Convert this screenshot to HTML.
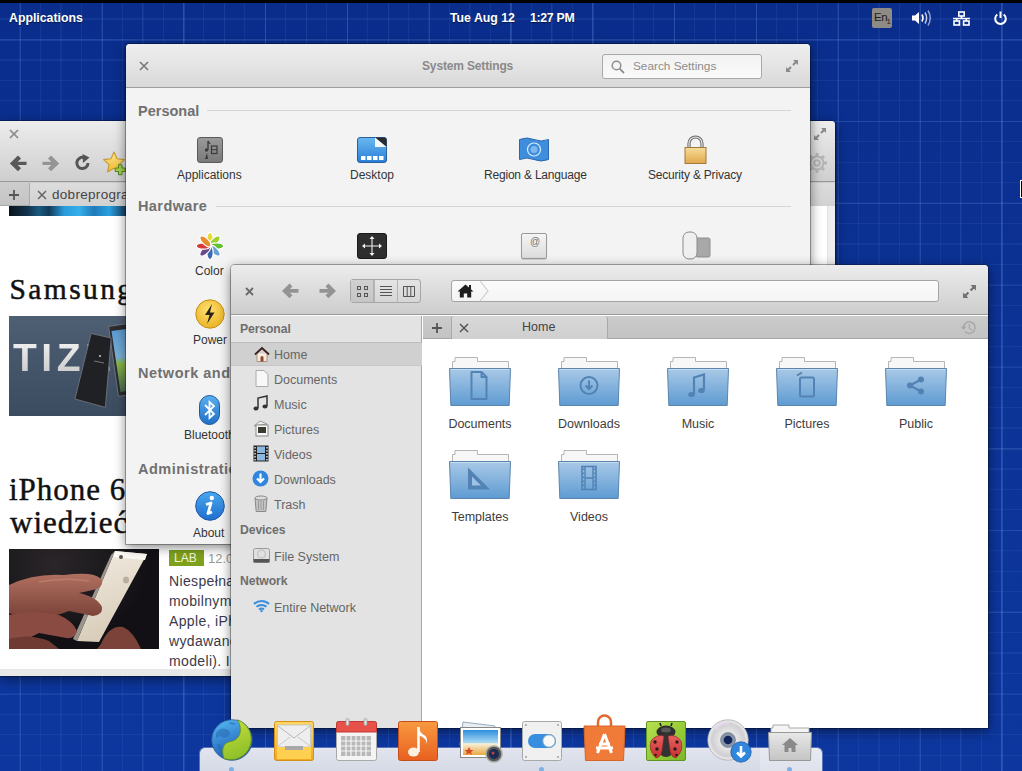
<!DOCTYPE html>
<html><head><meta charset="utf-8">
<style>
*{margin:0;padding:0;box-sizing:border-box}
html,body{width:1022px;height:771px;overflow:hidden;font-family:"Liberation Sans",sans-serif}
body{position:relative;background:#0b2c88}
.abs{position:absolute}
#wall{left:0;top:0;width:1022px;height:771px;
 background:
 repeating-linear-gradient(90deg, transparent 0px, transparent 19.7px, rgba(130,180,255,0.14) 19.7px, rgba(130,180,255,0.14) 21.0px, transparent 21.0px, transparent 81.8px),
 repeating-linear-gradient(90deg, transparent 0px, transparent 19.7px, rgba(130,180,255,0.06) 19.7px, rgba(130,180,255,0.06) 20.9px, transparent 20.9px, transparent 40.9px),
 repeating-linear-gradient(90deg, transparent 0px, transparent 19.45px, rgba(130,180,255,0.075) 19.45px, rgba(130,180,255,0.075) 20.45px),
 repeating-linear-gradient(180deg, transparent 0px, transparent 39.4px, rgba(130,180,255,0.12) 39.4px, rgba(130,180,255,0.12) 40.6px, transparent 40.6px, transparent 81.8px),
 repeating-linear-gradient(180deg, transparent 0px, transparent 18.45px, rgba(130,180,255,0.075) 18.45px, rgba(130,180,255,0.075) 19.6px, transparent 19.6px, transparent 20.45px),
 linear-gradient(#0a2d8c,#0c3396 50%,#0d379e);}
#topbar{left:0;top:0;width:1022px;height:3px;background:#000}
.ptxt{color:#fff;font-weight:bold;font-size:12.3px;top:10.8px;line-height:14px;text-shadow:0 1px 1px rgba(0,0,0,.5)}
.win{position:absolute;border-radius:4px 4px 0 0;overflow:hidden;box-shadow:0 3px 12px rgba(0,0,0,.5),0 0 0 1px rgba(0,0,0,.3)}
.t{position:absolute;white-space:nowrap;line-height:1}
svg{position:absolute;overflow:visible}
</style></head><body>
<div id="wall" class="abs"></div>
<div id="topbar" class="abs"></div>
<div class="abs ptxt" style="left:9px">Applications</div>
<div class="abs ptxt" style="left:450px">Tue Aug 12</div>
<div class="abs ptxt" style="left:530px;letter-spacing:-0.3px">1:27 PM</div>
<!-- panel indicators -->
<div class="abs" style="left:872px;top:8px;width:20px;height:20px;background:#8e8b84;border-radius:2px"></div>
<div class="t" style="left:874px;top:12px;font-size:11.5px;color:#1e1e1e;letter-spacing:-0.4px">En</div>
<div class="t" style="left:886.5px;top:18px;font-size:8px;color:#1e1e1e">1</div>
<svg style="left:910px;top:9px" width="22" height="18" viewBox="0 0 22 18">
 <path d="M2 6.5h3l4-3.5v12l-4-3.5h-3z" fill="#fff"/>
 <path d="M12 5.5q2 3.5 0 7" stroke="#fff" stroke-width="1.6" fill="none"/>
 <path d="M15 3.5q3.2 5.5 0 11" stroke="rgba(255,255,255,.75)" stroke-width="1.5" fill="none"/>
 <path d="M18 1.5q4.5 7.5 0 15" stroke="rgba(255,255,255,.55)" stroke-width="1.5" fill="none"/>
</svg>
<svg style="left:953px;top:11px" width="17" height="15" viewBox="0 0 17 15">
 <g fill="none" stroke="#fff" stroke-width="1.6">
 <rect x="5.8" y="1" width="5.4" height="4"/><rect x="1" y="10" width="5.4" height="4"/><rect x="10.6" y="10" width="5.4" height="4"/>
 <path d="M8.5 5v2.5M3.7 10V7.5h9.6V10M0 7.5h17" />
 </g>
</svg>
<svg style="left:993px;top:11px" width="15" height="15" viewBox="0 0 15 15">
 <path d="M4.3 3.5A5.3 5.3 0 1 0 10.7 3.5" stroke="#fff" stroke-width="2" fill="none"/>
 <path d="M7.5 0.5v6.5" stroke="#fff" stroke-width="2"/>
</svg>

<!-- BROWSER -->
<div class="win" style="left:0;top:121px;width:835px;height:555px;background:#fff;border-radius:0 4px 0 0">
  <div class="abs" style="left:0;top:0;width:835px;height:61px;background:linear-gradient(#ececec,#e0e0e0 40%,#cfcfcf);border-bottom:1px solid #999"></div>
  <svg style="left:9px;top:8px" width="10" height="10" viewBox="0 0 10 10"><path d="M1 1L9 9M9 1L1 9" stroke="#8a8a8a" stroke-width="1.7"/></svg>
  <svg style="left:10px;top:34px" width="18" height="17" viewBox="0 0 18 17"><path d="M9.5 2L3 8.4 9.5 14.8" stroke="#585858" stroke-width="4.4" fill="none"/><path d="M4 8.4H16.5" stroke="#585858" stroke-width="3.4"/></svg>
  <svg style="left:41px;top:34px" width="18" height="17" viewBox="0 0 18 17"><path d="M8.5 2L15 8.4 8.5 14.8" stroke="#959595" stroke-width="4.4" fill="none"/><path d="M1.5 8.4H14" stroke="#959595" stroke-width="3.4"/></svg>
  <svg style="left:73.5px;top:32.5px" width="17" height="17" viewBox="0 0 17 17"><path d="M14 9A5.6 5.6 0 1 1 10 3.6" stroke="#555" stroke-width="3" fill="none"/><path d="M8.5 0L15.5 3.5 9 9z" fill="#555"/></svg>
  <svg style="left:100px;top:28px" width="28" height="28" viewBox="0 0 28 28"><defs><linearGradient id="stg" x1="0" y1="0" x2="0" y2="1"><stop offset="0" stop-color="#fbe890"/><stop offset="1" stop-color="#f0b830"/></linearGradient></defs><path d="M14.00 3.00 L17.06 9.79 L24.46 10.60 L18.95 15.61 L20.47 22.90 L14.00 19.20 L7.53 22.90 L9.05 15.61 L3.54 10.60 L10.94 9.79z" fill="url(#stg)" stroke="#c89a30" stroke-width="1.1" stroke-linejoin="round"/><path d="M18.5 15.7h3.5v3.3h3.3v3.5h-3.3v3.3h-3.5v-3.3h-3.3v-3.5h3.3z" fill="#a4d048" stroke="#4a7a20" stroke-width="0.9"/></svg>
  <svg style="left:813px;top:6px" width="14" height="14" viewBox="0 0 14 14"><path d="M8 1h5v5zM6 13H1V8z" fill="#8a8a8a"/><path d="M12 2L8 6M2 12l4-4" stroke="#8a8a8a" stroke-width="2"/></svg>
  <svg style="left:806px;top:31px" width="22" height="22" viewBox="-11 -11 22 22"><g fill="none" stroke="#b4b4b4" stroke-width="2"><circle r="6.5"/><circle r="2.8"/></g><g stroke="#b4b4b4" stroke-width="3"><path d="M0-10v3M0 7v3M-10 0h3M7 0h3M-7-7l2 2M5 5l2 2M-7 7l2-2M5-5l2-2"/></g></svg>
  <div class="abs" style="left:0;top:61px;width:835px;height:24px;background:linear-gradient(#cdcdcd,#c4c4c4);border-bottom:1px solid #a8a8a8"></div>
  <div class="abs" style="left:29px;top:62px;width:806px;height:23px;background:linear-gradient(#dcdcdc,#d2d2d2);border-left:1px solid #aaa"></div>
  <svg style="left:8px;top:68px" width="12" height="12" viewBox="0 0 12 12"><path d="M6 1v10M1 6h10" stroke="#555" stroke-width="1.8"/></svg>
  <svg style="left:37px;top:69px" width="10" height="10" viewBox="0 0 10 10"><path d="M1 1L9 9M9 1L1 9" stroke="#666" stroke-width="1.5"/></svg>
  <div class="t" style="left:52px;top:66.5px;font-size:13.5px;color:#454545;letter-spacing:0.3px">dobreprogramy</div>
  <div class="abs" style="left:827px;top:85px;width:8px;height:470px;background:#eeeeee;border-left:1px solid #e2e2e2"></div>
  <!-- content -->
  <div class="abs" style="left:9px;top:85px;width:790px;height:10px;background:linear-gradient(90deg,#08121c 0px,#12324a 18px,#1a5a80 30px,#123a5a 40px,#2a9ada 55px,#36b0ec 70px,#1f7ab8 85px,#2aa0e0 100px,#163e60 117px,#1f6a9a 300px,#2a90d0 600px,#0d2a44 790px)"></div>
  <div class="t" style="left:9.5px;top:153.5px;font-family:'Liberation Serif',serif;font-size:29.5px;color:#111;letter-spacing:2.4px;-webkit-text-stroke:0.5px #111">Samsung</div>
  <div class="abs" style="left:9px;top:195px;width:790px;height:100px;background:linear-gradient(#4f5f73,#3c4c60)"></div>
  <div class="t" style="left:13px;top:217px;font-size:39px;font-weight:bold;color:#e6e6e6;letter-spacing:4.5px;background:linear-gradient(#f4f4f4,#c8c8c8);-webkit-background-clip:text;-webkit-text-fill-color:transparent">TIZEN</div>
  <svg style="left:70px;top:200px" width="70" height="95" viewBox="0 0 70 95"><defs><linearGradient id="scr" x1="0" y1="0" x2="0" y2="1"><stop offset="0" stop-color="#5a9ad0"/><stop offset=".45" stop-color="#7ab0d8"/><stop offset=".55" stop-color="#8ab848"/><stop offset="1" stop-color="#4a6a50"/></linearGradient></defs><path d="M38.6 5.4L62 2 72 72 48.4 75.4z" fill="#2a2c30" stroke="#7a7e86" stroke-width=".8"/><path d="M41.5 10L60 7.5 68.5 68 50.5 71z" fill="url(#scr)"/><path d="M21.1 12.5L41.2 17 35.4 86.4 4.9 78z" fill="#202124" stroke="#6a6e76" stroke-width="1"/><circle cx="30" cy="35" r="1" fill="#ccc"/><path d="M24 40l10 2" stroke="#777" stroke-width="1"/></svg>
  <div class="t" style="left:9px;top:353px;font-family:'Liberation Serif',serif;font-size:31px;color:#111;letter-spacing:1px;-webkit-text-stroke:0.45px #111">iPhone 6</div>
  <div class="t" style="left:10px;top:385.5px;font-family:'Liberation Serif',serif;font-size:31px;color:#111;letter-spacing:1px;-webkit-text-stroke:0.45px #111">wiedzieć</div>
  <div class="abs" style="left:9px;top:428px;width:150px;height:100px;background:radial-gradient(ellipse at 30% 15%,#2a262a,#121014 65%);overflow:hidden">
   <svg style="left:0;top:0" width="150" height="100" viewBox="0 0 150 100"><defs><linearGradient id="phg" x1="0" y1="0" x2="0.3" y2="1"><stop offset="0" stop-color="#f2ece2"/><stop offset="1" stop-color="#d8ccb8"/></linearGradient><linearGradient id="sk" x1="0" y1="0" x2="0" y2="1"><stop offset="0" stop-color="#b07060"/><stop offset="1" stop-color="#7a4238"/></linearGradient></defs>
   <path d="M106 2L138 5 90 93 68 92z" fill="url(#phg)"/><path d="M106 2L102 6 64 90 68 92z" fill="#9a948c"/><path d="M106 2L138 5 136 11 104 8z" fill="#faf8f2"/><circle cx="112" cy="8" r="2" fill="#555"/><ellipse cx="117" cy="31" rx="3" ry="3.5" fill="#b8b0a0"/>
   <path d="M0 36Q25 24 55 26Q85 22 92 30Q96 38 84 41L70 44Q88 48 93 58Q94 66 84 67L60 62Q40 70 20 68Q8 68 0 64z" fill="url(#sk)"/>
   <path d="M0 66Q25 60 50 66Q64 72 68 82Q66 92 52 88L30 84Q12 94 0 92z" fill="#8a4c42"/>
   <path d="M0 90Q20 84 40 92L50 100H0z" fill="#6e3a32"/>
   <path d="M92 95Q100 76 114 78Q124 82 132 100H88z" fill="#7a4238"/>
   <path d="M30 33Q55 28 80 32" stroke="#c88878" stroke-width="1.5" fill="none" opacity=".6"/></svg>
  </div>
  <div class="abs" style="left:169px;top:429px;width:35px;height:16px;background:#7ea11b"></div>
  <div class="t" style="left:174px;top:431px;font-size:12px;color:#f0f4e0">LAB</div>
  <div class="t" style="left:208px;top:431px;font-size:13px;color:#999">12.08.2014</div>
  <div class="t" style="left:169px;top:450px;font-size:14px;color:#3a3a4c;line-height:20px;letter-spacing:0.35px">Niespełna<br>mobilnym<br>Apple, iPhone<br>wydawane<br>modeli). I</div>
  <div class="abs" style="left:0;top:548px;width:835px;height:7px;background:#e8e8e8"></div>
</div>

<!-- SETTINGS -->
<div class="win" style="left:126px;top:44px;width:684px;height:500px;background:#f3f3f3">
  <div class="abs" style="left:0;top:0;width:684px;height:44px;background:linear-gradient(#eeeeee,#e4e4e4 50%,#d8d8d8);border-bottom:1px solid #9e9e9e"></div>
  <svg style="left:13px;top:17px" width="10" height="10" viewBox="0 0 10 10"><path d="M1 1L9 9M9 1L1 9" stroke="#7a7a7a" stroke-width="1.7"/></svg>
  <div class="t" style="left:296px;top:16px;font-size:12px;font-weight:bold;color:#8a8a8a;letter-spacing:-0.15px">System Settings</div>
  <div class="abs" style="left:476px;top:10px;width:160px;height:25px;background:linear-gradient(#f2f2f2,#fafafa);border:1px solid #a9a9a9;border-radius:3px"></div>
  <svg style="left:485px;top:16px" width="14" height="14" viewBox="0 0 14 14"><circle cx="5.5" cy="5.5" r="4.3" stroke="#8e8e8e" stroke-width="1.5" fill="none"/><path d="M8.6 8.6L13 13" stroke="#8e8e8e" stroke-width="1.8"/></svg>
  <div class="t" style="left:507px;top:16.5px;font-size:11.8px;color:#8c8c8c">Search Settings</div>
  <svg style="left:659px;top:15px" width="14" height="14" viewBox="0 0 14 14"><path d="M8 1h5v5zM6 13H1V8z" fill="#8a8a8a"/><path d="M12 2L8 6M2 12l4-4" stroke="#8a8a8a" stroke-width="2"/></svg>

  <div class="t" style="left:12px;top:60px;font-size:14.5px;font-weight:bold;color:#707070;letter-spacing:0px">Personal</div>
  <div class="abs" style="left:81px;top:66px;width:584px;height:1px;background:#d4d4d4"></div>
  <div class="t" style="left:12px;top:155px;font-size:14.5px;font-weight:bold;color:#707070;letter-spacing:0.4px">Hardware</div>
  <div class="abs" style="left:90px;top:162px;width:575px;height:1px;background:#d4d4d4"></div>
  <div class="t" style="left:12px;top:321.5px;font-size:14.5px;font-weight:bold;color:#707070;letter-spacing:0.5px">Network and Wireless</div>
  <div class="t" style="left:12px;top:417.5px;font-size:14.5px;font-weight:bold;color:#707070;letter-spacing:0.5px">Administration</div>

  <!-- personal icons -->
  <div class="abs" style="left:71px;top:93px;width:26px;height:26px;border-radius:3px;background:linear-gradient(#9a9a9a,#7a7a7a);border:1px solid #5a5a5a"></div>
  <svg style="left:71px;top:93px" width="26" height="26" viewBox="0 0 26 26"><path d="M11 4v9M11 4l2 3" stroke="#3a3a3a" stroke-width="1.3" fill="none"/><circle cx="9.5" cy="13" r="1.7" fill="#3a3a3a"/><path d="M10 16l-2 6h3z" fill="#3a3a3a"/><rect x="14.5" y="9" width="5.5" height="7.5" stroke="#3a3a3a" stroke-width="1.2" fill="none"/><path d="M14.5 12.7h5.5" stroke="#3a3a3a" stroke-width="1"/></svg>
  <div class="t" style="left:51px;top:125px;font-size:12px;color:#333">Applications</div>

  <svg style="left:231px;top:93px" width="30" height="26" viewBox="0 0 30 26"><defs><linearGradient id="dg" x1="0" y1="0" x2="0" y2="1"><stop offset="0" stop-color="#6ab8f0"/><stop offset="1" stop-color="#2a7ed8"/></linearGradient></defs><rect x="0.5" y="0.5" width="29" height="25" rx="2.5" fill="url(#dg)" stroke="#2a5f9e"/><path d="M18 0.5h9.5a2 2 0 0 1 2 2V10z" fill="#2b2b2b"/><path d="M18 0.5V10h11.5z" fill="#f4f8fc"/><g fill="#fff"><rect x="4" y="19" width="4.5" height="4"/><rect x="10" y="19" width="4.5" height="4"/><rect x="16" y="19" width="4.5" height="4"/><rect x="22" y="19" width="4.5" height="4"/></g></svg>
  <div class="t" style="left:224px;top:125px;font-size:12px;color:#333">Desktop</div>

  <svg style="left:393px;top:93px" width="30" height="25" viewBox="0 0 30 25"><path d="M0.5 2.5Q8 -0.5 15 2.5T29.5 2.5V22.5Q22 25.5 15 22.5T0.5 22.5z" fill="#3f8ede" stroke="#2a66b0"/><circle cx="15" cy="12.5" r="6.5" fill="none" stroke="#d8ecff" stroke-width="1.2"/><circle cx="15" cy="12.5" r="3.5" fill="#7fb8ee"/></svg>
  <div class="t" style="left:358px;top:125px;font-size:12px;color:#333;letter-spacing:-0.2px">Region &amp; Language</div>

  <svg style="left:558px;top:92px" width="23" height="28" viewBox="0 0 23 28"><path d="M5 12V7.5a6.5 6.5 0 0 1 13 0V12" stroke="#6a6a6a" stroke-width="3.2" fill="none"/><path d="M5 12V7.5a6.5 6.5 0 0 1 13 0V12" stroke="#e6e6e6" stroke-width="1.2" fill="none"/><defs><linearGradient id="lg" x1="0" y1="0" x2="0" y2="1"><stop offset="0" stop-color="#f6dc9a"/><stop offset="1" stop-color="#e0a84a"/></linearGradient></defs><rect x="1" y="11.5" width="21" height="16" fill="url(#lg)" stroke="#a07a3a"/></svg>
  <div class="t" style="left:522px;top:125px;font-size:12px;color:#333;letter-spacing:-0.2px">Security &amp; Privacy</div>

  <!-- hardware row1 -->
  <svg style="left:69px;top:187px" width="30" height="30" viewBox="-15 -15 30 30">
   <g stroke="#fff" stroke-width="1.2">
   <ellipse rx="3.2" ry="7.2" transform="rotate(0) translate(0,-6.5)" fill="#e8d830"/>
   <ellipse rx="3.2" ry="7.2" transform="rotate(45) translate(0,-6.5)" fill="#9cd030"/>
   <ellipse rx="3.2" ry="7.2" transform="rotate(90) translate(0,-6.5)" fill="#62c030"/>
   <ellipse rx="3.2" ry="7.2" transform="rotate(135) translate(0,-6.5)" fill="#6aa0d8"/>
   <ellipse rx="3.2" ry="7.2" transform="rotate(180) translate(0,-6.5)" fill="#3a6ab0"/>
   <ellipse rx="3.2" ry="7.2" transform="rotate(225) translate(0,-6.5)" fill="#6a4a8a"/>
   <ellipse rx="3.2" ry="7.2" transform="rotate(270) translate(0,-6.5)" fill="#d83838"/>
   <ellipse rx="3.2" ry="7.2" transform="rotate(315) translate(0,-6.5)" fill="#e88a30"/>
   </g>
  </svg>
  <div class="t" style="left:69px;top:221px;font-size:12px;color:#333">Color</div>
  <div class="abs" style="left:231px;top:189px;width:30px;height:26px;border-radius:3px;background:#2e2e2e;border:1px solid #1a1a1a"></div>
  <svg style="left:231px;top:189px" width="30" height="26" viewBox="0 0 30 26"><path d="M15 4v18M6 13h18" stroke="#f0f0f0" stroke-width="1.1"/><path d="M15 3l-2.5 3h5zM15 23l-2.5-3h5zM5 13l3-2.5v5zM25 13l-3-2.5v5z" fill="#f0f0f0"/></svg>
  <div class="abs" style="left:395px;top:189px;width:26px;height:26px;border-radius:2px;background:linear-gradient(#f4f4f4,#dcdcdc);border:1px solid #9a9a9a;box-shadow:0 1px 1px rgba(0,0,0,.15)"></div>
  <div class="t" style="left:404px;top:193px;font-size:10px;color:#777">@</div>
  <svg style="left:556px;top:187px" width="29" height="29" viewBox="0 0 29 29"><rect x="14" y="7" width="14" height="19" rx="1.5" fill="#a8a8a8" stroke="#8e8e8e"/><rect x="1" y="1" width="14" height="27" rx="6" fill="#efefef" stroke="#8a8a8a"/></svg>

  <!-- power -->
  <svg style="left:69px;top:255px" width="30" height="30" viewBox="0 0 30 30"><defs><radialGradient id="pg" cx="0.45" cy="0.35" r="0.7"><stop offset="0" stop-color="#ffe070"/><stop offset="1" stop-color="#e8b020"/></radialGradient></defs><circle cx="15" cy="15" r="14.2" fill="url(#pg)" stroke="#c79018"/><path d="M17 5l-7 11h4.5l-2.5 9 7.5-11.5h-4.5z" fill="#2a2418"/></svg>
  <div class="t" style="left:67px;top:290px;font-size:12px;color:#333">Power</div>

  <!-- bluetooth -->
  <svg style="left:73px;top:351px" width="21" height="30" viewBox="0 0 21 30"><defs><linearGradient id="bg" x1="0" y1="0" x2="0" y2="1"><stop offset="0" stop-color="#5ab0f0"/><stop offset="1" stop-color="#1f6fc8"/></linearGradient></defs><rect x="0.5" y="0.5" width="20" height="29" rx="10" fill="url(#bg)" stroke="#1a5aa0"/><path d="M6 10l9 9-4.5 4V7L15 11l-9 9" stroke="#fff" stroke-width="1.8" fill="none"/></svg>
  <div class="t" style="left:58px;top:385px;font-size:12px;color:#333">Bluetooth</div>

  <!-- about -->
  <svg style="left:69px;top:447px" width="30" height="30" viewBox="0 0 30 30"><defs><linearGradient id="ag" x1="0" y1="0" x2="0" y2="1"><stop offset="0" stop-color="#4aa8ec"/><stop offset="1" stop-color="#1f6ed0"/></linearGradient></defs><circle cx="15" cy="15" r="14.3" fill="url(#ag)" stroke="#1c5aa8"/><circle cx="16.8" cy="7" r="2.2" fill="#fff"/><path d="M11 13.5l5-1.5-3 10.5 4-1.5" stroke="#fff" stroke-width="2.8" fill="none" stroke-linejoin="round"/></svg>
  <div class="t" style="left:67px;top:482.5px;font-size:12px;color:#333">About</div>
</div>

<!-- FILES -->
<div class="win" style="left:231px;top:265px;width:757px;height:463px;background:#fff">
  <div class="abs" style="left:0;top:0;width:757px;height:50px;background:linear-gradient(#ececec,#dedede 45%,#cdcdcd);border-bottom:1px solid #999"></div>
  <svg style="left:13.5px;top:21.5px" width="9" height="9" viewBox="0 0 9 9"><path d="M1 1L8 8M8 1L1 8" stroke="#6a6a6a" stroke-width="1.8"/></svg>
  <svg style="left:51px;top:18px" width="18" height="16" viewBox="0 0 18 16"><path d="M9 2L3 7.9 9 13.8" stroke="#939393" stroke-width="4.2" fill="none"/><path d="M4 7.9H16.5" stroke="#939393" stroke-width="3.8"/></svg>
  <svg style="left:87px;top:18px" width="18" height="16" viewBox="0 0 18 16"><path d="M9 2L15 7.9 9 13.8" stroke="#939393" stroke-width="4.2" fill="none"/><path d="M1.5 7.9H14" stroke="#939393" stroke-width="3.8"/></svg>
  <div class="abs" style="left:119px;top:14px;width:71px;height:24px;border:1px solid #a6a6a6;border-radius:3px;background:linear-gradient(#e4e4e4,#d6d6d6)"></div>
  <div class="abs" style="left:120px;top:15px;width:23px;height:22px;background:linear-gradient(#d0d0d0,#c6c6c6);border-right:1px solid #b0b0b0"></div>
  <div class="abs" style="left:143px;top:15px;width:1px;height:22px;background:#b4b4b4"></div>
  <div class="abs" style="left:166px;top:15px;width:1px;height:22px;background:#b4b4b4"></div>
  <svg style="left:125px;top:20px" width="13" height="13" viewBox="0 0 13 13"><g fill="none" stroke="#555" stroke-width="1"><rect x="1.5" y="1.5" width="3" height="3"/><rect x="8.5" y="1.5" width="3" height="3"/><rect x="1.5" y="8.5" width="3" height="3"/><rect x="8.5" y="8.5" width="3" height="3"/></g></svg>
  <svg style="left:148px;top:20px" width="14" height="13" viewBox="0 0 14 13"><path d="M1 1.5h12M1 4.5h12M1 7.5h12M1 10.5h12" stroke="#555" stroke-width="1"/></svg>
  <svg style="left:171px;top:20px" width="14" height="13" viewBox="0 0 14 13"><path d="M1.5 1.5h11v10h-11zM5.2 1.5v10M8.8 1.5v10" stroke="#555" stroke-width="1" fill="none"/></svg>
  <div class="abs" style="left:220px;top:15px;width:488px;height:22px;border:1px solid #a4a4a4;border-radius:3px;background:linear-gradient(#fbfbfb,#f4f4f4)"></div>
  <svg style="left:226px;top:16px" width="36" height="20" viewBox="0 0 36 20"><path d="M23 0l8 10-8 10" stroke="#cdcdcd" stroke-width="1.2" fill="none"/></svg>
  <svg style="left:226px;top:19px" width="17" height="14" viewBox="0 0 17 14"><path d="M8.5 0.5L0.5 7.5h2.3V13.5h4V9.5h3.4v4h4V7.5h2.3z" fill="#1e1e1e"/><rect x="12" y="1" width="2" height="4" fill="#1e1e1e"/></svg>
  <svg style="left:731px;top:19px" width="15" height="15" viewBox="0 0 14 14"><path d="M8 1h5v5zM6 13H1V8z" fill="#707070"/><path d="M12 2L8 6M2 12l4-4" stroke="#707070" stroke-width="2"/></svg>

  <!-- sidebar -->
  <div class="abs" style="left:0;top:51px;width:191px;height:412px;background:#e3e3e3;border-right:1px solid #a9a9a9"></div>
  <div class="abs" style="left:0;top:77px;width:191px;height:24px;background:#d0d0d0;border-top:1px solid #bcbcbc;border-bottom:1px solid #c8c8c8"></div>
  <div class="t" style="left:9px;top:58px;font-size:12.2px;font-weight:bold;color:#6e6e6e;letter-spacing:-0.1px">Personal</div>
  <div class="t" style="left:9px;top:259px;font-size:12.2px;font-weight:bold;color:#6e6e6e;letter-spacing:-0.1px">Devices</div>
  <div class="t" style="left:9px;top:310px;font-size:12.2px;font-weight:bold;color:#6e6e6e;letter-spacing:-0.1px">Network</div>
  <div class="t" style="left:43px;top:83.5px;font-size:12.5px;color:#666">Home</div>
  <div class="t" style="left:43px;top:108.5px;font-size:12.5px;color:#666">Documents</div>
  <div class="t" style="left:43px;top:133.5px;font-size:12.5px;color:#666">Music</div>
  <div class="t" style="left:43px;top:158.5px;font-size:12.5px;color:#666">Pictures</div>
  <div class="t" style="left:43px;top:183.5px;font-size:12.5px;color:#666">Videos</div>
  <div class="t" style="left:43px;top:208.5px;font-size:12.5px;color:#666">Downloads</div>
  <div class="t" style="left:43px;top:233.5px;font-size:12.5px;color:#666">Trash</div>
  <div class="t" style="left:43px;top:285.5px;font-size:12.5px;color:#666">File System</div>
  <div class="t" style="left:43px;top:336.5px;font-size:12.5px;color:#666">Entire Network</div>
  <!-- sidebar icons -->
  <svg style="left:22.5px;top:81px" width="16" height="16" viewBox="0 0 16 16"><path d="M3 7.5v8h10v-8" fill="#fbeadb" stroke="#a08070" stroke-width=".8"/><path d="M1 8.5L8 2l7 6.5" stroke="#3a2018" stroke-width="1.8" fill="none"/><path d="M6.5 15.5v-4a1.5 1.5 0 0 1 3 0v4z" fill="#8a4a30"/></svg>
  <svg style="left:24px;top:105px" width="14" height="17" viewBox="0 0 14 17"><path d="M1 0.5h8l4 4v12H1z" fill="#f8f8f8" stroke="#aaa"/></svg>
  <svg style="left:21px;top:130px" width="17" height="17" viewBox="0 0 17 17"><path d="M6 13V3l9-2v10" stroke="#333" stroke-width="1.5" fill="none"/><ellipse cx="4" cy="13.5" rx="2.5" ry="2" fill="#333"/><ellipse cx="13" cy="11.5" rx="2.5" ry="2" fill="#333"/></svg>
  <svg style="left:22px;top:155px" width="17" height="17" viewBox="0 0 17 17"><path d="M1 6l6-5 7 3z" fill="#eee" stroke="#999"/><rect x="3" y="5" width="12" height="11" fill="#fafafa" stroke="#888"/><rect x="5" y="7" width="8" height="6" fill="#3a3a30"/></svg>
  <svg style="left:22px;top:180px" width="16" height="17" viewBox="0 0 16 17"><rect x="0.5" y="0.5" width="15" height="16" fill="#222"/><rect x="4" y="1.5" width="8" height="6.5" fill="#8ab8e0"/><rect x="4" y="9" width="8" height="6.5" fill="#8ab8e0"/><g fill="#ddd"><rect x="1.3" y="2" width="1.5" height="1.5"/><rect x="1.3" y="5" width="1.5" height="1.5"/><rect x="1.3" y="8" width="1.5" height="1.5"/><rect x="1.3" y="11" width="1.5" height="1.5"/><rect x="1.3" y="14" width="1.5" height="1.5"/><rect x="13.2" y="2" width="1.5" height="1.5"/><rect x="13.2" y="5" width="1.5" height="1.5"/><rect x="13.2" y="8" width="1.5" height="1.5"/><rect x="13.2" y="11" width="1.5" height="1.5"/><rect x="13.2" y="14" width="1.5" height="1.5"/></g></svg>
  <svg style="left:21px;top:205px" width="17" height="17" viewBox="0 0 17 17"><circle cx="8.5" cy="8.5" r="8" fill="#2f86dc"/><path d="M8.5 3.5v8M5 8.5l3.5 3.5 3.5-3.5" stroke="#fff" stroke-width="2.2" fill="none"/></svg>
  <svg style="left:23px;top:230px" width="14" height="17" viewBox="0 0 14 17"><path d="M1 3h12l-1.2 13.5H2.2z" fill="#c4c4c4" stroke="#888"/><ellipse cx="7" cy="3" rx="6" ry="2" fill="#ddd" stroke="#888"/><path d="M4.5 6v9M7 6v9M9.5 6v9" stroke="#999"/></svg>
  <svg style="left:22px;top:282px" width="17" height="17" viewBox="0 0 17 17"><rect x="0.5" y="1.5" width="16" height="14" rx="2" fill="#e0e0e0" stroke="#999"/><rect x="0.5" y="12" width="16" height="3.5" fill="#555"/><circle cx="8.5" cy="7" r="4" fill="none" stroke="#bbb"/></svg>
  <svg style="left:22px;top:334px" width="17" height="13" viewBox="0 0 17 13"><path d="M1 5a11 11 0 0 1 15 0M3.5 7.8a7.5 7.5 0 0 1 10 0M6 10.5a4 4 0 0 1 5 0" stroke="#3a8ee0" stroke-width="2" fill="none"/><circle cx="8.5" cy="12" r="1.2" fill="#3a8ee0"/></svg>

  <!-- tab bar -->
  <div class="abs" style="left:192px;top:51px;width:565px;height:23px;background:linear-gradient(#cbcbcb,#c3c3c3);border-bottom:1px solid #a6a6a6"></div>
  <div class="abs" style="left:220px;top:51px;width:157px;height:23px;background:linear-gradient(#d8d8d8,#cfcfcf);border-left:1px solid #a9a9a9;border-right:1px solid #a9a9a9;border-radius:3px 3px 0 0"></div>
  <svg style="left:200px;top:57px" width="12" height="12" viewBox="0 0 12 12"><path d="M6 1v10M1 6h10" stroke="#555" stroke-width="1.8"/></svg>
  <svg style="left:228px;top:58px" width="10" height="10" viewBox="0 0 10 10"><path d="M1 1L9 9M9 1L1 9" stroke="#555" stroke-width="1.5"/></svg>
  <div class="t" style="left:291px;top:56px;font-size:12.5px;color:#444">Home</div>
  <svg style="left:729px;top:55px" width="16" height="15" viewBox="0 0 16 15"><path d="M3.5 7.5A5.8 5.8 0 1 1 5 11.5" stroke="#a8a8a8" stroke-width="1.5" fill="none"/><path d="M0.5 6.5L3.5 10 6.5 6.5z" fill="#a8a8a8"/><path d="M9.3 4v4l2.5 2" stroke="#a8a8a8" stroke-width="1.3" fill="none"/></svg>
  <div class="abs" style="left:192px;top:74px;width:565px;height:389px;background:#fff"></div>
</div>

<!-- folder layer -->
<div class="abs" style="left:231px;top:265px;width:757px;height:463px">
<svg width="0" height="0" style="position:absolute"><defs><linearGradient id="fg" x1="0" y1="0" x2="0" y2="1"><stop offset="0" stop-color="#a9c9e7"/><stop offset="1" stop-color="#5e9bd2"/></linearGradient></defs></svg>
<svg style="left:218px;top:91px" width="62" height="51" viewBox="0 0 62 51"><path d="M3.5 13V5.5H6V1.5h22.5v4h31V13z" fill="#f7f7f7" stroke="#b5b5b5"/><path d="M0.5 12.5h61l-1.3 37H1.8z" fill="url(#fg)" stroke="#5c85ad"/><path d="M1.5 13.5h59" stroke="#c4dcf0" stroke-width="1"/><g transform="translate(0,2.5)"><path d="M22.5 13.5h10l5 5v22h-15z M32.5 13.5v5h5" stroke="#5283b4" stroke-width="2" fill="none" stroke-linejoin="round"/></g></svg>
<svg style="left:327px;top:91px" width="62" height="51" viewBox="0 0 62 51"><path d="M3.5 13V5.5H6V1.5h22.5v4h31V13z" fill="#f7f7f7" stroke="#b5b5b5"/><path d="M0.5 12.5h61l-1.3 37H1.8z" fill="url(#fg)" stroke="#5c85ad"/><path d="M1.5 13.5h59" stroke="#c4dcf0" stroke-width="1"/><g transform="translate(0,2.5)"><circle cx="31" cy="27" r="8.5" stroke="#5283b4" stroke-width="2" fill="none"/><path d="M31 22v8M27.5 27l3.5 3.5 3.5-3.5" stroke="#5283b4" stroke-width="2" fill="none"/></g></svg>
<svg style="left:436px;top:91px" width="62" height="51" viewBox="0 0 62 51"><path d="M3.5 13V5.5H6V1.5h22.5v4h31V13z" fill="#f7f7f7" stroke="#b5b5b5"/><path d="M0.5 12.5h61l-1.3 37H1.8z" fill="url(#fg)" stroke="#5c85ad"/><path d="M1.5 13.5h59" stroke="#c4dcf0" stroke-width="1"/><g transform="translate(0,2.5)"><path d="M27 36V19l10-3v15" stroke="#5283b4" stroke-width="2.2" fill="none"/><ellipse cx="24.5" cy="36" rx="3.3" ry="2.6" fill="#5283b4"/><ellipse cx="34.5" cy="32" rx="3.3" ry="2.6" fill="#5283b4"/></g></svg>
<svg style="left:545px;top:91px" width="62" height="51" viewBox="0 0 62 51"><path d="M3.5 13V5.5H6V1.5h22.5v4h31V13z" fill="#f7f7f7" stroke="#b5b5b5"/><path d="M0.5 12.5h61l-1.3 37H1.8z" fill="url(#fg)" stroke="#5c85ad"/><path d="M1.5 13.5h59" stroke="#c4dcf0" stroke-width="1"/><g transform="translate(0,2.5)"><rect x="24" y="19" width="14" height="19" rx="1.5" stroke="#5283b4" stroke-width="2" fill="none"/><path d="M21 17l5-3" stroke="#5283b4" stroke-width="2"/></g></svg>
<svg style="left:654px;top:91px" width="62" height="51" viewBox="0 0 62 51"><path d="M3.5 13V5.5H6V1.5h22.5v4h31V13z" fill="#f7f7f7" stroke="#b5b5b5"/><path d="M0.5 12.5h61l-1.3 37H1.8z" fill="url(#fg)" stroke="#5c85ad"/><path d="M1.5 13.5h59" stroke="#c4dcf0" stroke-width="1"/><g transform="translate(0,2.5)"><circle cx="25" cy="27" r="3" fill="#5283b4"/><circle cx="36" cy="21" r="3" fill="#5283b4"/><circle cx="36" cy="33" r="3" fill="#5283b4"/><path d="M25 27l11-6M25 27l11 6" stroke="#5283b4" stroke-width="2"/></g></svg>
<svg style="left:218px;top:184px" width="62" height="51" viewBox="0 0 62 51"><path d="M3.5 13V5.5H6V1.5h22.5v4h31V13z" fill="#f7f7f7" stroke="#b5b5b5"/><path d="M0.5 12.5h61l-1.3 37H1.8z" fill="url(#fg)" stroke="#5c85ad"/><path d="M1.5 13.5h59" stroke="#c4dcf0" stroke-width="1"/><g transform="translate(0,2.5)"><path d="M19 16v22h22z" fill="#5283b4"/><path d="M23 25v9h9z" fill="#9cc2e4"/></g></svg>
<svg style="left:327px;top:184px" width="62" height="51" viewBox="0 0 62 51"><path d="M3.5 13V5.5H6V1.5h22.5v4h31V13z" fill="#f7f7f7" stroke="#b5b5b5"/><path d="M0.5 12.5h61l-1.3 37H1.8z" fill="url(#fg)" stroke="#5c85ad"/><path d="M1.5 13.5h59" stroke="#c4dcf0" stroke-width="1"/><g transform="translate(0,2.5)"><rect x="24" y="15" width="14" height="23" stroke="#5283b4" stroke-width="1.6" fill="none"/><path d="M27 15v23M35 15v23M27 26.5h8" stroke="#5283b4" stroke-width="1.4"/><g fill="#5283b4"><rect x="24.8" y="17" width="1.4" height="1.6"/><rect x="24.8" y="21" width="1.4" height="1.6"/><rect x="24.8" y="25" width="1.4" height="1.6"/><rect x="24.8" y="29" width="1.4" height="1.6"/><rect x="24.8" y="33" width="1.4" height="1.6"/><rect x="35.8" y="17" width="1.4" height="1.6"/><rect x="35.8" y="21" width="1.4" height="1.6"/><rect x="35.8" y="25" width="1.4" height="1.6"/><rect x="35.8" y="29" width="1.4" height="1.6"/><rect x="35.8" y="33" width="1.4" height="1.6"/></g></g></svg>

<div class="t" style="left:199px;top:153px;width:100px;text-align:center;font-size:12.5px;color:#3c3c3c">Documents</div><div class="t" style="left:308px;top:153px;width:100px;text-align:center;font-size:12.5px;color:#3c3c3c">Downloads</div><div class="t" style="left:417px;top:153px;width:100px;text-align:center;font-size:12.5px;color:#3c3c3c">Music</div><div class="t" style="left:526px;top:153px;width:100px;text-align:center;font-size:12.5px;color:#3c3c3c">Pictures</div><div class="t" style="left:635px;top:153px;width:100px;text-align:center;font-size:12.5px;color:#3c3c3c">Public</div><div class="t" style="left:199px;top:245.5px;width:100px;text-align:center;font-size:12.5px;color:#3c3c3c">Templates</div><div class="t" style="left:308px;top:245.5px;width:100px;text-align:center;font-size:12.5px;color:#3c3c3c">Videos</div>
</div>

<!-- DOCK -->
<div class="abs" style="left:200px;top:748px;width:622px;height:23px;background:linear-gradient(#e2e5ef,#d6dae6);border-radius:5px 5px 0 0;box-shadow:0 0 0 1px rgba(255,255,255,.3)"></div>
<div class="abs" style="left:760px;top:748px;width:62px;height:23px;background:rgba(255,255,255,.22);border-radius:0 5px 0 0"></div>
<!-- globe -->
<svg style="left:211px;top:719px" width="42" height="42" viewBox="0 0 42 42"><defs><linearGradient id="gl" x1="0.2" y1="0" x2="0.6" y2="1"><stop offset="0" stop-color="#52b8f2"/><stop offset=".6" stop-color="#2f78c8"/><stop offset="1" stop-color="#24569a"/></linearGradient><linearGradient id="gr" x1="0" y1="0" x2="0.3" y2="1"><stop offset="0" stop-color="#c8e040"/><stop offset="1" stop-color="#90c028"/></linearGradient></defs><circle cx="21" cy="21" r="20.3" fill="url(#gl)" stroke="#2a5a90" stroke-width=".8"/><path d="M5 14q4-6 10-4t3 7q-4 3-7 1t-6 2z M6 25q3-1 5 3t0 7q-4-3-5-10z M17 4q5-2 8 1q-3 2-8-1z" fill="#2a68b0" opacity=".55"/><path d="M26.6 0.8A20.3 20.3 0 0 1 13 39.6C10 31 12 23.5 19.5 22.5C28.5 21 32.5 12 26.6 0.8z" fill="url(#gr)" stroke="#5a8a20" stroke-width=".8"/></svg>
<!-- mail -->
<svg style="left:274px;top:721px" width="40" height="40" viewBox="0 0 40 40"><defs><linearGradient id="ml" x1="0" y1="0" x2="0" y2="1"><stop offset="0" stop-color="#ffd860"/><stop offset="1" stop-color="#f0a820"/></linearGradient></defs><rect x="0.5" y="0.5" width="39" height="39" rx="2" fill="url(#ml)" stroke="#d49018"/><rect x="3.5" y="4" width="33" height="22" fill="#eeeeee" stroke="#c8c8c8"/><path d="M4 5l16 12L36 5" stroke="#b8b8b8" fill="none"/><path d="M4 25l12-9M36 25l-12-9" stroke="#c8c8c8" fill="none"/><rect x="3" y="26" width="34" height="12" fill="#ffd050"/><rect x="11" y="25" width="18" height="4" fill="#a8a8a8"/></svg>
<!-- calendar -->
<svg style="left:336px;top:718px" width="41" height="43" viewBox="0 0 41 43"><rect x="0.5" y="3.5" width="40" height="39" rx="2" fill="#f4f4f4" stroke="#a8a8a8"/><path d="M0.5 14V5.5a2 2 0 0 1 2-2h36a2 2 0 0 1 2 2V14z" fill="#e8504a" stroke="#c03a34"/><rect x="10" y="0.5" width="3" height="7" rx="1.5" fill="#ddd" stroke="#999" stroke-width=".7"/><rect x="28" y="0.5" width="3" height="7" rx="1.5" fill="#ddd" stroke="#999" stroke-width=".7"/><g fill="#b8b8b8"><rect x="5" y="18" width="30" height="20"/></g><g stroke="#f4f4f4" stroke-width="1.2"><path d="M10 18v20M15 18v20M20 18v20M25 18v20M30 18v20M5 23h30M5 28h30M5 33h30"/></g></svg>
<!-- music -->
<svg style="left:398px;top:721px" width="40" height="40" viewBox="0 0 40 40"><defs><linearGradient id="mu" x1="0" y1="0" x2="0" y2="1"><stop offset="0" stop-color="#f89a40"/><stop offset="1" stop-color="#e86020"/></linearGradient></defs><rect x="0.5" y="0.5" width="39" height="39" rx="2" fill="url(#mu)" stroke="#c84e18"/><path d="M20.5 6v25" stroke="#fff" stroke-width="2.5"/><path d="M20.5 6q1 6 7 9q3 3 0 9q3-6-7-10" fill="#fff"/><ellipse cx="15.5" cy="31" rx="5.5" ry="4.5" fill="#fdf0e0"/></svg>
<!-- photos -->
<svg style="left:457px;top:719px" width="47" height="43" viewBox="0 0 47 43"><path d="M6 3l32 4-3 23L3 26z" fill="#e8eef4" stroke="#9ab"/><rect x="3.5" y="8.5" width="40" height="30" fill="#fff" stroke="#888"/><defs><linearGradient id="ph" x1="0" y1="0" x2="0" y2="1"><stop offset="0" stop-color="#2e8ee0"/><stop offset=".5" stop-color="#a8d8f0"/><stop offset=".55" stop-color="#f8f0d8"/><stop offset="1" stop-color="#e8a840"/></linearGradient></defs><rect x="6" y="11" width="35" height="25" fill="url(#ph)"/><path d="M12 28l1.5 3h3l-2.5 2 1 3-3-2-3 2 1-3-2.5-2h3z" fill="#d84828"/><circle cx="37" cy="35" r="8" fill="#555" stroke="#aaa" stroke-width="1.5"/><circle cx="37" cy="35" r="5" fill="#1a2a50"/><circle cx="36" cy="34" r="1.5" fill="#c04040"/></svg>
<!-- switchboard -->
<svg style="left:522px;top:721px" width="40" height="40" viewBox="0 0 40 40"><rect x="0.5" y="0.5" width="39" height="39" rx="2" fill="#f0f0f0" stroke="#a8a8a8"/><g fill="#999"><circle cx="4" cy="4" r=".9"/><circle cx="36" cy="4" r=".9"/><circle cx="4" cy="36" r=".9"/><circle cx="36" cy="36" r=".9"/></g><rect x="6" y="13" width="28" height="14" rx="7" fill="#3a8ee0"/><circle cx="27" cy="20" r="6.2" fill="#f8f8f8" stroke="#8ab"/></svg>
<!-- appcenter -->
<svg style="left:583px;top:717px" width="43" height="44" viewBox="0 0 43 44"><path d="M15 10V5a6 6 0 0 1 13 0v5" stroke="#e06a30" stroke-width="2.5" fill="none"/><path d="M1 9h41l-1.5 34.5H2.5z" fill="#f07a38" stroke="#d86428"/><path d="M21.5 17l-7 19M21.5 17l7 19M16 27h11M13 31h17" stroke="#fff" stroke-width="3" fill="none"/></svg>
<!-- ladybug -->
<svg style="left:646px;top:721px" width="40" height="40" viewBox="0 0 40 40"><defs><linearGradient id="lb" x1="0" y1="0" x2="1" y2="1"><stop offset="0" stop-color="#b8e050"/><stop offset=".5" stop-color="#98cc38"/><stop offset="1" stop-color="#7ab828"/></linearGradient><linearGradient id="wg" x1="0" y1="0" x2="0" y2="1"><stop offset="0" stop-color="#e86060"/><stop offset="1" stop-color="#c83030"/></linearGradient></defs><rect x="0.5" y="0.5" width="39" height="39" rx="1.5" fill="url(#lb)" stroke="#5f9420"/><path d="M15 5l-1-3M25 5l1-3" stroke="#222" stroke-width="1.6"/><ellipse cx="20" cy="11" rx="9.5" ry="6.5" fill="#2e2e2e"/><ellipse cx="20" cy="9" rx="5" ry="2.5" fill="#5a5a5a"/><ellipse cx="20" cy="24" rx="9" ry="12" fill="#333"/><path d="M18 15Q10 13 5 20Q2 30 10 37Q15 36 16 30z" fill="url(#wg)" stroke="#8a2020" stroke-width=".6"/><path d="M22 15Q30 13 35 20Q38 30 30 37Q25 36 24 30z" fill="url(#wg)" stroke="#8a2020" stroke-width=".6"/><g fill="#2a1a1a"><circle cx="9" cy="21" r="1.7"/><circle cx="11" cy="28" r="1.7"/><circle cx="9.5" cy="34" r="1.3"/><circle cx="31" cy="21" r="1.7"/><circle cx="29" cy="28" r="1.7"/><circle cx="30.5" cy="34" r="1.3"/></g></svg>
<!-- disc -->
<svg style="left:707px;top:719px" width="46" height="46" viewBox="0 0 46 46"><defs><radialGradient id="dc" cx="0.5" cy="0.5" r="0.5"><stop offset="0" stop-color="#ffffff"/><stop offset=".45" stop-color="#e4e4e4"/><stop offset=".8" stop-color="#d0d0d4"/><stop offset="1" stop-color="#f0f0f0"/></radialGradient></defs><circle cx="21" cy="21" r="20.2" fill="url(#dc)" stroke="#a8a8a8" stroke-width=".8"/><path d="M8 10q6-7 14-6" stroke="#e8d8f0" stroke-width="3" fill="none" opacity=".7"/><circle cx="21" cy="21" r="7.5" fill="#8893a6" stroke="#6a7488" stroke-width=".6"/><circle cx="21" cy="21" r="4.3" fill="#10245a"/><circle cx="34" cy="33" r="10.2" fill="#2f86dc" stroke="#1f5fa8" stroke-width=".8"/><path d="M34 27v10M30 33.5l4 4 4-4" stroke="#fff" stroke-width="2.6" fill="none"/></svg>
<!-- home folder -->
<svg style="left:768px;top:724px" width="44" height="37" viewBox="0 0 44 37"><path d="M3 9V4h2V1h16v3h20v5z" fill="#f4f4f4" stroke="#aaa"/><defs><linearGradient id="hf" x1="0" y1="0" x2="0" y2="1"><stop offset="0" stop-color="#e8e8e8"/><stop offset="1" stop-color="#c4c4c4"/></linearGradient></defs><path d="M0.5 8.5h43l-1 28H1.5z" fill="url(#hf)" stroke="#999"/><path d="M22 14l-8 7h2.5v7h4v-4h3v4h4v-7H30z" fill="#8a8a8a"/></svg>
<!-- cursor edge -->
<div class="abs" style="left:1020px;top:180px;width:2px;height:18px;background:#000;border-left:1px solid #fff;border-top:1px solid #fff;border-bottom:1px solid #fff"></div>
<!-- indicator dots -->
<div class="abs" style="left:229px;top:767px;width:5px;height:5px;border-radius:50%;background:#7cb0e4"></div>
<div class="abs" style="left:539px;top:767px;width:5px;height:5px;border-radius:50%;background:#7cb0e4"></div>
<div class="abs" style="left:787px;top:767px;width:5px;height:5px;border-radius:50%;background:#7cb0e4"></div>
</body></html>
